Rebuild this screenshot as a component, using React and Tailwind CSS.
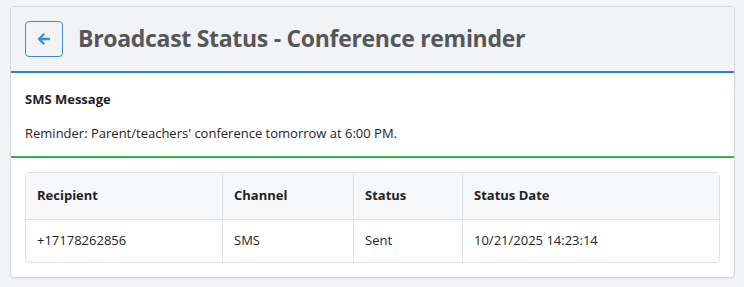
import React from 'react';

const rows = [
  { recipient: '+17178262856', channel: 'SMS', status: 'Sent', date: '10/21/2025 14:23:14' },
];

const cols = 'grid grid-cols-[197px_131px_109px_1fr]';

const BroadcastStatus = () => {
  return (
    <div className="min-h-[287px] w-[744px] bg-[#f3f5f9] pt-[6px] pl-[10px] pr-[9px] font-['Open_Sans',sans-serif]">
      <div className="rounded-[4px] border border-[#d6d9df] bg-white shadow-[0_1px_2px_rgba(0,0,0,0.08)] overflow-hidden">
        {/* Header */}
        <div className="flex items-center gap-[15px] bg-[#f2f3f5] px-[14px] py-[14px] border-b-2 border-[#2585d4]">
          <button className="flex h-[36px] w-[38px] items-center justify-center rounded-[4px] border border-[#3a8fdb] bg-[#f2f3f5] text-[#3a8fdb]">
            <svg width="14" height="14" viewBox="0 0 14 14" fill="none" stroke="currentColor" strokeWidth="2.4" strokeLinecap="round" strokeLinejoin="round">
              <path d="M12 7H2.5" />
              <path d="M6.5 2.5L2 7l4.5 4.5" />
            </svg>
          </button>
          <h1 className="text-[23px] font-bold leading-none text-[#555659] tracking-[-0.3px] -mt-[2px]">
            Broadcast Status - Conference reminder
          </h1>
        </div>

        {/* Message */}
        <div className="px-[14px] pt-[17px] pb-[14px] border-b-2 border-[#2db84c] text-[13px] text-[#1f2327]">
          <p className="font-bold leading-[18px]">SMS Message</p>
          <p className="mt-[16px] leading-[18px]">Reminder: Parent/teachers' conference tomorrow at 6:00 PM.</p>
        </div>

        {/* Table */}
        <div className="px-[14px] pt-[14px] pb-[14px]">
          <div className="rounded-[4px] border border-[#dee2e6] text-[13px] text-[#1f2327]">
            <div className={`${cols} bg-[#f7f8fa] font-bold border-b border-[#dee2e6]`}>
              {['Recipient', 'Channel', 'Status', 'Status Date'].map((h, i) => (
                <div key={h} className={`h-[46px] flex items-center px-[11px] ${i < 3 ? 'border-r border-[#dee2e6]' : ''}`}>
                  {h}
                </div>
              ))}
            </div>
            {rows.map(r => (
              <div key={r.recipient} className={cols}>
                {[r.recipient, r.channel, r.status, r.date].map((v, i) => (
                  <div key={i} className={`h-[42px] flex items-center px-[11px] ${i < 3 ? 'border-r border-[#dee2e6]' : ''}`}>
                    {v}
                  </div>
                ))}
              </div>
            ))}
          </div>
        </div>
      </div>
    </div>
  );
};

export default function App() {
  return <BroadcastStatus />;
}
